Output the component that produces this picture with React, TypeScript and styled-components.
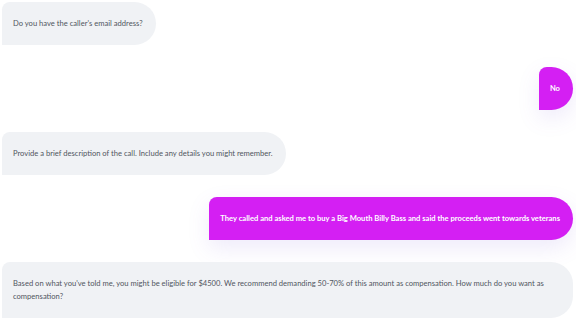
import React from "react"
import styled, { createGlobalStyle } from "styled-components"

type Sender = "bot" | "user"

interface Message {
  id: number
  from: Sender
  text: string
}

const messages: Message[] = [
  { id: 1, from: "bot", text: "Do you have the caller's email address?" },
  { id: 2, from: "user", text: "No" },
  { id: 3, from: "bot", text: "Provide a brief description of the call. Include any details you might remember." },
  {
    id: 4,
    from: "user",
    text: "They called and asked me to buy a Big Mouth Billy Bass and said the proceeds went towards veterans",
  },
  {
    id: 5,
    from: "bot",
    text: "Based on what you've told me, you might be eligible for $4500. We recommend demanding 50-70% of this amount as compensation. How much do you want as compensation?",
  },
]

const GlobalStyle = createGlobalStyle`
  html, body {
    margin: 0;
    padding: 0;
    background: #ffffff;
    overflow: hidden;
  }

  body {
    font-family: Lato, "Liberation Sans", sans-serif;
  }
`

const Thread = styled.div`
  display: flex;
  flex-direction: column;
  gap: 22px;
  padding: 2px 3px 0 2px;
`

const Row = styled.div<{ $from: Sender }>`
  display: flex;
  justify-content: ${(p) => (p.$from === "user" ? "flex-end" : "flex-start")};
`

const Bubble = styled.div<{ $from: Sender }>`
  box-sizing: border-box;
  min-height: 43px;
  max-width: 100%;
  padding: 15px 13px 15px 11px;
  border-radius: 8px 22px 22px 0;
  font-size: 7.6px;
  line-height: 13px;
  background: ${(p) => (p.$from === "user" ? "#d41ff3" : "#f0f2f5")};
  color: ${(p) => (p.$from === "user" ? "#ffffff" : "#505661")};
  font-weight: ${(p) => (p.$from === "user" ? 700 : 400)};
  box-shadow: ${(p) => (p.$from === "user" ? "0 8px 22px rgba(120, 90, 220, 0.13)" : "none")};
`

export default function App() {
  return (
    <>
      <GlobalStyle />
      <Thread>
        {messages.map((m) => (
          <Row key={m.id} $from={m.from}>
            <Bubble $from={m.from}>{m.text}</Bubble>
          </Row>
        ))}
      </Thread>
    </>
  )
}
